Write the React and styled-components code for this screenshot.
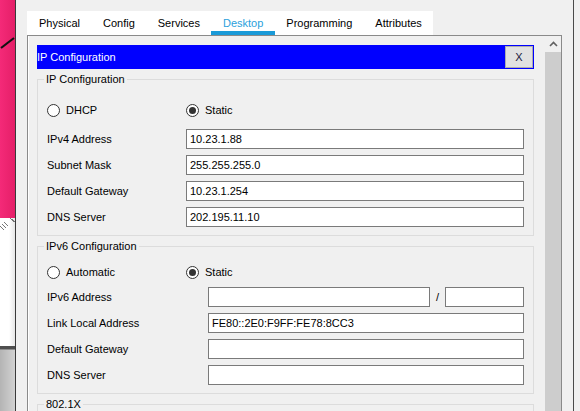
import React from "react";
import styled, { createGlobalStyle } from "styled-components";

const GlobalStyle = createGlobalStyle`
  html, body {
    margin: 0;
    padding: 0;
    background: #f0f0f0;
  }
  body {
    font-family: "Liberation Sans", Arial, sans-serif;
    font-size: 11px;
    color: #000;
  }
`;

const Screen = styled.div`
  width: 580px;
  height: 411px;
  display: flex;
  overflow: hidden;
  background: #f0f0f0;
`;

const Strip = styled.div`
  width: 15px;
  border-right: 1px solid #3a3a3a;
  display: flex;
  flex-direction: column;
  flex-shrink: 0;
`;

const Pink = styled.div`
  height: 218px;
  background: linear-gradient(to right, #f42a78, #e51f68);
  display: flex;
  flex-direction: column;
  padding-top: 37px;
  box-sizing: border-box;
`;

const Paper = styled.div`
  height: 128px;
  background: linear-gradient(to right, #ffffff 60%, #e6e6e6);
  display: flex;
  justify-content: flex-end;
  align-items: flex-start;
`;

const Seam = styled.div`
  height: 3px;
  background: #4e4e4e;
  border-bottom: 1px solid #8c8c8c;
`;

const Metal = styled.div`
  flex: 1;
  background: linear-gradient(to right, #b4b4b4, #d2d2d2);
`;

const Main = styled.div`
  width: 535px;
  margin-left: 11px;
  padding-top: 11px;
  display: flex;
  flex-direction: column;
  flex-shrink: 0;
`;

const TabBar = styled.div`
  display: flex;
  align-self: flex-start;
  height: 24px;
  background: #fff;
  padding-left: 0.5px;
`;

const Tab = styled.div`
  padding: 4px 11.5px 0;
  display: flex;
  align-items: center;
  justify-content: center;
  box-sizing: border-box;
  height: 24px;
  line-height: 1;
  color: ${(p) => (p.$active ? "#2a9fdc" : "#000")};
  border-bottom: 4px solid ${(p) => (p.$active ? "#1a9ad8" : "transparent")};
`;

const Panel = styled.div`
  flex: 1;
  display: flex;
  border: 1px solid #8a8a8a;
  border-bottom: none;
  box-shadow: inset 1px 0 0 #ffffff;
`;

const Content = styled.div`
  flex: 1;
  padding: 9px 11px 0 9px;
  display: flex;
  flex-direction: column;
`;

const TitleBar = styled.div`
  height: 24px;
  box-sizing: border-box;
  background: #0000ff;
  display: flex;
  align-items: center;
  justify-content: space-between;
  padding: 1px;
  color: #fff;
`;

const Title = styled.span`
  margin-left: -1px;
`;

const CloseButton = styled.button`
  width: 28px;
  height: 22px;
  background: #e1e1e1;
  border: 1px solid #adadad;
  font-family: inherit;
  font-size: 11px;
  color: #1a1a40;
  padding: 0;
  margin: 0;
`;

const Group = styled.fieldset`
  margin: 3px 0 0;
  padding: 0 9px 8px;
  border: 1px solid #dcdcdc;
  display: flex;
  flex-direction: column;
  min-width: 0;
`;

const Legend = styled.legend`
  padding: 0 2px;
  margin-left: -3px;
  line-height: 14px;
`;

const Options = styled.div`
  display: flex;
  height: 20px;
  align-items: center;
  margin-top: ${(p) => p.$top}px;
  margin-bottom: ${(p) => p.$bottom}px;
`;

const Option = styled.label`
  display: flex;
  align-items: center;
  gap: 6px;
  width: ${(p) => p.$width || "auto"};
`;

const Radio = styled.span`
  width: 13px;
  height: 13px;
  box-sizing: border-box;
  border: 1px solid #333;
  border-radius: 50%;
  background: #fff;
  display: flex;
  align-items: center;
  justify-content: center;
  &::after {
    content: "";
    width: 7px;
    height: 7px;
    border-radius: 50%;
    background: ${(p) => (p.$checked ? "#333" : "transparent")};
  }
`;

const Fields = styled.div`
  display: flex;
  flex-direction: column;
  gap: 6px;
`;

const Row = styled.div`
  display: flex;
  align-items: center;
  height: 20px;
`;

const Label = styled.span`
  width: ${(p) => p.$width}px;
  flex-shrink: 0;
`;

const Input = styled.div`
  height: 20px;
  box-sizing: border-box;
  border: 1px solid #7a7a7a;
  background: #fff;
  padding: 0 3px;
  display: flex;
  align-items: center;
  flex: ${(p) => (p.$width ? "none" : "1")};
  width: ${(p) => (p.$width ? `${p.$width}px` : "auto")};
`;

const Slash = styled.span`
  width: 15px;
  text-align: center;
`;

const Scrollbar = styled.div`
  width: 16px;
  display: flex;
  flex-direction: column;
`;

const ScrollUp = styled.div`
  height: 16px;
  display: flex;
  align-items: center;
  justify-content: center;
  background: #f0f0f0;
`;

const Thumb = styled.div`
  flex: 1;
  background: #cdcdcd;
`;

const EdgeLine = styled.div`
  width: 1px;
  margin-left: 11px;
  background: #4a4a4a;
  flex-shrink: 0;
`;

const ipv4 = [
  ["IPv4 Address", "10.23.1.88"],
  ["Subnet Mask", "255.255.255.0"],
  ["Default Gateway", "10.23.1.254"],
  ["DNS Server", "202.195.11.10"],
];

const ipv6 = [
  ["Link Local Address", "FE80::2E0:F9FF:FE78:8CC3"],
  ["Default Gateway", ""],
  ["DNS Server", ""],
];

const tabs = ["Physical", "Config", "Services", "Desktop", "Programming", "Attributes"];

export default function App() {
  return (
    <>
      <GlobalStyle />
      <Screen>
        <Strip>
          <Pink>
            <svg width="15" height="12" viewBox="0 0 15 12">
              <line x1="1" y1="11" x2="14" y2="1" stroke="#111" strokeWidth="2.2" />
            </svg>
          </Pink>
          <Paper>
            <svg width="15" height="14" viewBox="0 0 15 14">
              <g stroke="#555" strokeWidth="0.8">
                <line x1="0" y1="8" x2="4" y2="12" />
                <line x1="2" y1="6" x2="6" y2="10" />
                <line x1="4" y1="4" x2="8" y2="8" />
                <line x1="10" y1="0" x2="14" y2="4" />
                <line x1="12" y1="1" x2="15" y2="4" />
              </g>
            </svg>
          </Paper>
          <Seam />
          <Metal />
        </Strip>
        <Main>
          <TabBar>
            {tabs.map((t) => (
              <Tab key={t} $active={t === "Desktop"}>
                {t}
              </Tab>
            ))}
          </TabBar>
          <Panel>
            <Content>
              <TitleBar>
                <Title>IP Configuration</Title>
                <CloseButton>X</CloseButton>
              </TitleBar>

              <Group>
                <Legend>IP Configuration</Legend>
                <Options $top={14} $bottom={9}>
                  <Option $width="139px">
                    <Radio />
                    DHCP
                  </Option>
                  <Option>
                    <Radio $checked />
                    Static
                  </Option>
                </Options>
                <Fields>
                  {ipv4.map(([label, value]) => (
                    <Row key={label}>
                      <Label $width={139}>{label}</Label>
                      <Input>{value}</Input>
                    </Row>
                  ))}
                </Fields>
              </Group>

              <Group>
                <Legend>IPv6 Configuration</Legend>
                <Options $top={9} $bottom={5}>
                  <Option $width="139px">
                    <Radio />
                    Automatic
                  </Option>
                  <Option>
                    <Radio $checked />
                    Static
                  </Option>
                </Options>
                <Fields>
                  <Row>
                    <Label $width={161}>IPv6 Address</Label>
                    <Input $width={222} />
                    <Slash>/</Slash>
                    <Input />
                  </Row>
                  {ipv6.map(([label, value]) => (
                    <Row key={label}>
                      <Label $width={161}>{label}</Label>
                      <Input>{value}</Input>
                    </Row>
                  ))}
                </Fields>
              </Group>

              <Group>
                <Legend>802.1X</Legend>
                <Options $top={14} $bottom={9} />
              </Group>
            </Content>
            <Scrollbar>
              <ScrollUp>
                <svg width="9" height="6" viewBox="0 0 9 6">
                  <polyline points="1,5 4.5,1.5 8,5" fill="none" stroke="#606060" strokeWidth="1.6" />
                </svg>
              </ScrollUp>
              <Thumb />
            </Scrollbar>
          </Panel>
        </Main>
        <EdgeLine />
      </Screen>
    </>
  );
}
